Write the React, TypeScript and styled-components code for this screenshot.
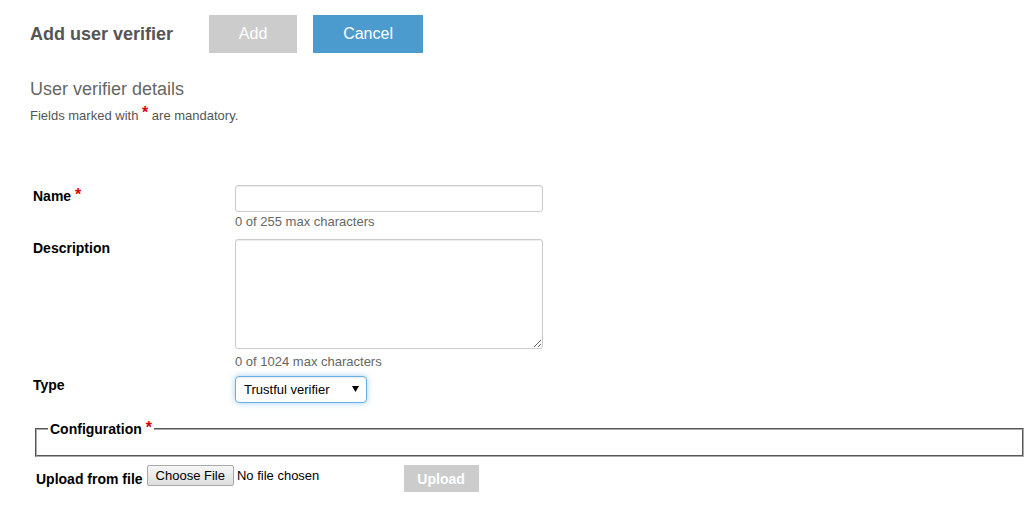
import React from 'react';
import styled, { createGlobalStyle } from 'styled-components';

const GlobalStyle = createGlobalStyle`
  html, body {
    margin: 0;
    padding: 0;
    background: #fff;
    font-family: "Liberation Sans", Arial, sans-serif;
  }
  * {
    box-sizing: border-box;
  }
`;

const Page = styled.div`
  width: 1026px;
  padding-top: 15px;
`;

const Header = styled.div`
  display: flex;
  align-items: center;
  padding-left: 30px;
  height: 38px;
`;

const Title = styled.h1`
  margin: 0 36px 0 0;
  font-size: 18px;
  font-weight: bold;
  color: #555;
  line-height: 22px;
`;

const HeaderButton = styled.button<{ primary?: boolean }>`
  height: 38px;
  min-width: ${p => (p.primary ? '110px' : '88px')};
  margin-right: 16px;
  border: none;
  padding: 0 20px;
  font-family: inherit;
  font-size: 16px;
  color: #fff;
  background: ${p => (p.primary ? '#4b9bcf' : '#cccccc')};
  cursor: ${p => (p.primary ? 'pointer' : 'default')};
`;

const Intro = styled.div`
  padding-left: 30px;
  margin-top: 25px;
`;

const SectionTitle = styled.h2`
  margin: 0;
  font-size: 18px;
  font-weight: normal;
  line-height: 22px;
  color: #666;
`;

const Note = styled.p`
  margin: 8px 0 0;
  font-size: 13px;
  line-height: 15px;
  color: #555;
`;

const Star = styled.span<{ lift?: number }>`
  color: #d00;
  font-weight: bold;
  font-size: 16px;
  line-height: 0;
  position: relative;
  top: ${p => -(p.lift ?? 2)}px;
`;

const Form = styled.div`
  padding-left: 33px;
  margin-top: 62px;
`;

const FieldGrid = styled.div`
  display: grid;
  grid-template-columns: 202px 308px;
`;

const Label = styled.label<{ offset?: number }>`
  font-size: 14px;
  font-weight: bold;
  line-height: 16px;
  color: #000;
  padding-top: ${p => p.offset ?? 3}px;
`;

const FieldCell = styled.div<{ gapBelow?: number }>`
  margin-bottom: ${p => p.gapBelow ?? 0}px;
`;

const TextInput = styled.input`
  display: block;
  width: 308px;
  height: 27px;
  border: 1px solid #ccc;
  border-radius: 3px;
  box-shadow: inset 0 1px 1px rgba(0, 0, 0, 0.075);
  font-family: inherit;
  font-size: 13px;
  padding: 4px 8px;
  outline: none;
`;

const TextArea = styled.textarea`
  display: block;
  width: 308px;
  height: 110px;
  border: 1px solid #ccc;
  border-radius: 3px;
  box-shadow: inset 0 1px 1px rgba(0, 0, 0, 0.075);
  font-family: inherit;
  font-size: 13px;
  padding: 4px 8px;
  outline: none;
  resize: both;
`;

const Hint = styled.div<{ top?: number }>`
  margin-top: ${p => p.top ?? 2}px;
  font-size: 13px;
  line-height: 15px;
  color: #666;
`;

const SelectWrap = styled.div`
  position: relative;
  width: 132px;
  height: 27px;
`;

const Select = styled.select`
  appearance: none;
  -webkit-appearance: none;
  width: 132px;
  height: 27px;
  border: 1px solid #66afe9;
  border-radius: 4px;
  background: #fff;
  box-shadow: inset 0 1px 1px rgba(0, 0, 0, 0.075), 0 0 6px rgba(102, 175, 233, 0.6);
  font-family: inherit;
  font-size: 13px;
  color: #000;
  padding: 0 20px 0 8px;
  outline: none;
`;

const Caret = styled.svg`
  position: absolute;
  right: 8px;
  top: 10px;
  pointer-events: none;
`;

const Fieldset = styled.fieldset`
  margin: 18px 2px 0 2px;
  padding: 0 11px;
  border: 2px groove #aaa;
  min-width: 0;
`;

const Legend = styled.legend`
  padding: 0 2px;
  font-size: 14px;
  font-weight: bold;
  line-height: 16px;
  color: #000;
`;

const FieldsetBody = styled.div`
  height: 18px;
`;

const UploadRow = styled.div`
  display: flex;
  align-items: center;
  height: 27px;
  margin-top: 8px;
  padding-left: 3px;
`;

const UploadLabel = styled.span`
  font-size: 14px;
  font-weight: bold;
  color: #000;
  margin-right: 4px;
`;

const FileInput = styled.input`
  align-self: flex-start;
  width: 257px;
  font-family: "Liberation Sans", Arial, sans-serif;
  font-size: 13px;
  color: #000;

  &::file-selector-button {
    font-family: inherit;
    font-size: 13px;
    height: 21px;
    padding: 0 8px;
    margin-right: 3px;
    border: 1px solid #a9a9a9;
    border-radius: 2px;
    background: linear-gradient(#f6f6f6, #dedede);
    color: #000;
  }
`;

const UploadButton = styled.button`
  width: 75px;
  height: 27px;
  border: none;
  background: #ccc;
  color: #fff;
  font-family: inherit;
  font-size: 14px;
  font-weight: bold;
  padding: 0;
`;

export default function App() {
  return (
    <Page>
      <GlobalStyle />
      <Header>
        <Title>Add user verifier</Title>
        <HeaderButton disabled>Add</HeaderButton>
        <HeaderButton primary>Cancel</HeaderButton>
      </Header>

      <Intro>
        <SectionTitle>User verifier details</SectionTitle>
        <Note>
          Fields marked with <Star>*</Star> are mandatory.
        </Note>
      </Intro>

      <Form>
        <FieldGrid>
          <Label offset={3}>
            Name <Star lift={1}>*</Star>
          </Label>
          <FieldCell gapBelow={10}>
            <TextInput type="text" />
            <Hint>0 of 255 max characters</Hint>
          </FieldCell>

          <Label offset={1}>Description</Label>
          <FieldCell gapBelow={7}>
            <TextArea />
            <Hint top={5}>0 of 1024 max characters</Hint>
          </FieldCell>

          <Label offset={1}>Type</Label>
          <FieldCell>
            <SelectWrap>
              <Select defaultValue="trustful">
                <option value="trustful">Trustful verifier</option>
              </Select>
              <Caret width="7" height="6" viewBox="0 0 7 6">
                <path d="M0 0 H7 L3.5 6 Z" fill="#000" />
              </Caret>
            </SelectWrap>
          </FieldCell>
        </FieldGrid>

        <Fieldset>
          <Legend>
            Configuration <Star lift={1}>*</Star>
          </Legend>
          <FieldsetBody />
        </Fieldset>

        <UploadRow>
          <UploadLabel>Upload from file</UploadLabel>
          <FileInput type="file" />
          <UploadButton disabled>Upload</UploadButton>
        </UploadRow>
      </Form>
    </Page>
  );
}
